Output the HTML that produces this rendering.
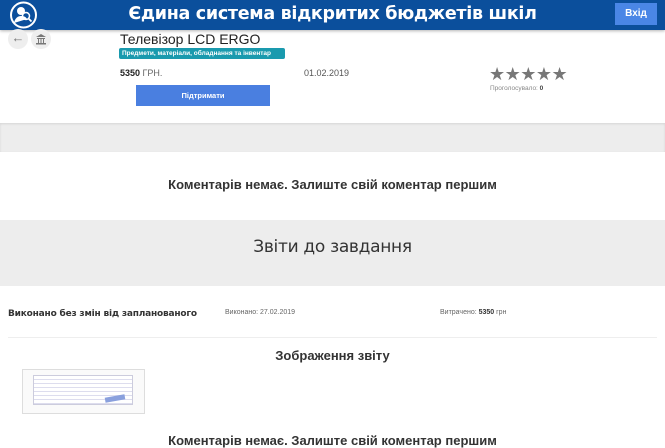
<!DOCTYPE html>
<html><head><meta charset="utf-8"><style>
*{margin:0;padding:0;box-sizing:border-box}
body{width:665px;height:447px;overflow:hidden;background:#fff;font-family:"Liberation Sans","DejaVu Sans",sans-serif;position:relative;color:#222}
.a{position:absolute;white-space:nowrap}
.c{left:0;width:665px;text-align:center;font-size:13px;font-weight:bold;font-family:"Liberation Sans",sans-serif;color:#333}
</style></head><body>
<div class="a" style="left:0;top:0;width:665px;height:30px;background:#0b4f9c;box-shadow:0 1px 3px rgba(0,0,0,.3)"></div>
<svg class="a" style="left:9px;top:1px" width="29" height="28" viewBox="0 0 29 28"><circle cx="14.5" cy="14" r="12.5" fill="none" stroke="#fff" stroke-width="2"/><circle cx="12" cy="10" r="4" fill="#fff"/><path d="M5 22c1-5 4-7 7-7s5 1 6 3" fill="#fff"/><circle cx="17" cy="15" r="3.5" fill="none" stroke="#fff" stroke-width="1.5"/><path d="M19.5 17.5l3 3" stroke="#fff" stroke-width="1.8"/></svg>
<div class="a" style="left:0;width:665px;top:4px;text-align:center;color:#fff;font-weight:bold;font-size:17.5px;font-family:'DejaVu Sans',sans-serif;letter-spacing:-0.3px">Єдина система відкритих бюджетів шкіл</div>
<div class="a" style="left:615px;top:3px;width:42px;height:22px;background:#4a86e6;color:#fff;font-size:10px;font-weight:bold;text-align:center;line-height:22px">Вхід</div>
<div class="a" style="left:8px;top:29px;width:20px;height:20px;border-radius:50%;background:#eee;color:#777;font-size:13px;text-align:center;line-height:18px">←</div>
<div class="a" style="left:31px;top:29px;width:20px;height:20px;border-radius:50%;background:#eee"></div>
<svg class="a" style="left:35px;top:33px" width="12" height="12" viewBox="0 0 12 12"><path d="M1 4L6 1l5 3zM2 5h8v1H2zM3 6h1v4H3zM5.5 6h1v4h-1zM8 6h1v4H8zM1 10h10v1.5H1z" fill="#777"/></svg>
<div class="a" style="left:120px;top:31px;font-size:14px;color:#222">Телевізор LCD ERGO</div>
<div class="a" style="left:119px;top:48px;height:11px;width:166px;background:#1a9aae;border-radius:2px;color:#fff;font-size:6.5px;font-weight:bold;line-height:11px;padding-left:3px">Предмети, матеріали, обладнання та інвентар</div>
<div class="a" style="left:120px;top:68px;font-size:9px"><b>5350</b> <span style="color:#666">ГРН.</span></div>
<div class="a" style="left:304px;top:68px;font-size:9px;color:#555">01.02.2019</div>
<div class="a" style="left:489px;top:64px;font-size:18px;color:#777;letter-spacing:-0.5px">★★★★★</div>
<div class="a" style="left:490px;top:85px;font-size:6.5px;color:#888">Проголосувало: <b style="color:#444">0</b></div>
<div class="a" style="left:136px;top:85px;width:134px;height:21px;background:#4a7fe0;color:#fff;font-size:7.5px;font-weight:bold;text-align:center;line-height:21px">Підтримати</div>
<div class="a" style="left:0;top:123px;width:665px;height:29px;background:#ededed;box-shadow:inset 0 1px 2px rgba(0,0,0,.1)"></div>
<div class="a c" style="top:177px">Коментарів немає. Залиште свій коментар першим</div>
<div class="a" style="left:0;top:220px;width:665px;height:66px;background:#ededed"></div>
<div class="a" style="left:0;width:665px;top:237px;text-align:center;font-size:17px;font-family:'DejaVu Sans',sans-serif;color:#333;letter-spacing:-0.3px">Звіти до завдання</div>
<div class="a" style="left:8px;top:309px;font-size:9px;font-weight:bold;color:#333;font-family:'DejaVu Sans',sans-serif;letter-spacing:-0.2px">Виконано без змін від запланованого</div>
<div class="a" style="left:225px;top:309px;font-size:7px;color:#666">Виконано: 27.02.2019</div>
<div class="a" style="left:440px;top:309px;font-size:7px;color:#666">Витрачено: <b style="color:#333">5350</b> грн</div>
<div class="a" style="left:8px;top:337px;width:649px;height:1px;background:#eee"></div>
<div class="a c" style="top:348px">Зображення звіту</div>
<div class="a" style="left:22px;top:369px;width:123px;height:45px;border:1px solid #ddd;background:#fafafa">
<div class="a" style="left:10px;top:5px;width:100px;height:30px;border:1px solid #ccd;background:repeating-linear-gradient(#fff 0 3px,#dde 3px 4px)"></div>
<div class="a" style="left:82px;top:26px;width:20px;height:5px;background:#8aa0dd;transform:rotate(-10deg)"></div></div>
<div class="a c" style="top:433px">Коментарів немає. Залиште свій коментар першим</div>
</body></html>
